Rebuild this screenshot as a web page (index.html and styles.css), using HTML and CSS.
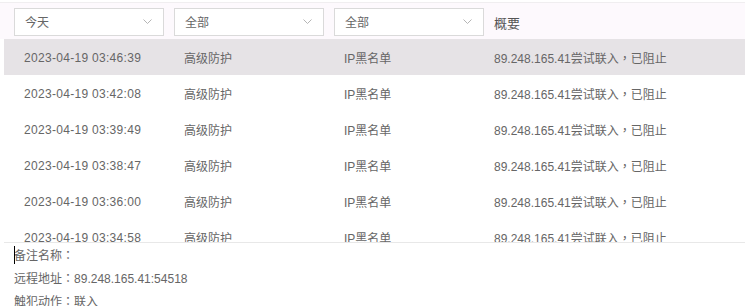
FILE: index.html
```html
<!DOCTYPE html>
<html lang="zh-CN">

<head>
    <meta charset="UTF-8">
    <title>防护日志</title>
    <link rel="stylesheet" href="styles.css">
</head>

<body>
    <div class="log_page">
        <div class="filter_bar">
            <div class="select_box">
                <span>今天</span>
                <svg class="arrow" width="9" height="5" viewBox="0 0 9 5"><path d="M0.5 0.5 L4.5 4.5 L8.5 0.5" fill="none" stroke="#b5b5b5" stroke-width="1"/></svg>
            </div>
            <div class="select_box">
                <span>全部</span>
                <svg class="arrow" width="9" height="5" viewBox="0 0 9 5"><path d="M0.5 0.5 L4.5 4.5 L8.5 0.5" fill="none" stroke="#b5b5b5" stroke-width="1"/></svg>
            </div>
            <div class="select_box">
                <span>全部</span>
                <svg class="arrow" width="9" height="5" viewBox="0 0 9 5"><path d="M0.5 0.5 L4.5 4.5 L8.5 0.5" fill="none" stroke="#b5b5b5" stroke-width="1"/></svg>
            </div>
            <div class="summary_title">概要</div>
        </div>
        <div class="log_list">
            <div class="log_row active">
                <span class="time">2023-04-19 03:46:39</span><span>高级防护</span><span>IP黑名单</span><span>89.248.165.41尝试联入<i class="punct" lang="zh-TW">，</i>已阻止</span>
            </div>
            <div class="log_row">
                <span class="time">2023-04-19 03:42:08</span><span>高级防护</span><span>IP黑名单</span><span>89.248.165.41尝试联入<i class="punct" lang="zh-TW">，</i>已阻止</span>
            </div>
            <div class="log_row">
                <span class="time">2023-04-19 03:39:49</span><span>高级防护</span><span>IP黑名单</span><span>89.248.165.41尝试联入<i class="punct" lang="zh-TW">，</i>已阻止</span>
            </div>
            <div class="log_row">
                <span class="time">2023-04-19 03:38:47</span><span>高级防护</span><span>IP黑名单</span><span>89.248.165.41尝试联入<i class="punct" lang="zh-TW">，</i>已阻止</span>
            </div>
            <div class="log_row">
                <span class="time">2023-04-19 03:36:00</span><span>高级防护</span><span>IP黑名单</span><span>89.248.165.41尝试联入<i class="punct" lang="zh-TW">，</i>已阻止</span>
            </div>
            <div class="log_row">
                <span class="time">2023-04-19 03:34:58</span><span>高级防护</span><span>IP黑名单</span><span>89.248.165.41尝试联入<i class="punct" lang="zh-TW">，</i>已阻止</span>
            </div>
        </div>
        <div class="detail">
            <div class="detail_line caret">备注名称<i class="punct" lang="zh-TW">：</i></div>
            <div class="detail_line">远程地址<i class="punct" lang="zh-TW">：</i>89.248.165.41:54518</div>
            <div class="detail_line">触犯动作<i class="punct" lang="zh-TW">：</i>联入</div>
        </div>
    </div>
</body>

</html>
```

FILE: styles.css
```css
body {
    margin: 0px;
    padding: 0px;
    background-color: #ffffff;
    font-family: "Liberation Sans", "Noto Sans CJK SC", sans-serif;
    font-size: 12px;
    color: #666666;
}

.log_page {
    width: 746px;
    height: 306px;
    overflow: hidden;
}

.filter_bar {
    display: flex;
    align-items: center;
    margin-top: 2px;
    height: 37px;
    padding-left: 14px;
    border-top: 1px solid #f0eef0;
    background-color: #fdf9fd;
    gap: 10px;
    box-sizing: border-box;
    margin-right: 1px;
}

.select_box {
    display: flex;
    align-items: center;
    justify-content: space-between;
    width: 150px;
    height: 28px;
    padding: 0px 10px;
    box-sizing: border-box;
    background-color: #ffffff;
    border: 1px solid #dadada;
    margin-top: 1px;
}

.arrow {
    margin-right: 1px;
}

.summary_title {
    font-size: 13px;
    color: #555555;
    margin-top: 2px;
}

.log_list {
    height: 203px;
    overflow: hidden;
    margin-left: 4px;
    margin-right: 1px;
    border-bottom: 1px solid #e8e8e8;
}

.log_row {
    display: grid;
    grid-template-columns: 160px 160px 150px 1fr;
    height: 36px;
    align-items: center;
}

.log_row span {
    padding-left: 20px;
    padding-top: 1px;
    white-space: nowrap;
}

.log_row .time {
    letter-spacing: 0.3px;
}

.log_row.active {
    background-color: #e6e3e6;
}

/* 全角标点居中显示 */
.punct {
    font-style: normal;
    font-family: "Noto Sans CJK TC", sans-serif;
}

.detail {
    padding-top: 1px;
    padding-left: 14px;
}

.detail_line {
    line-height: 22px;
    position: relative;
}

.caret::before {
    content: "";
    position: absolute;
    left: 0px;
    top: 2px;
    width: 1px;
    height: 18px;
    background-color: #000000;
}
```
